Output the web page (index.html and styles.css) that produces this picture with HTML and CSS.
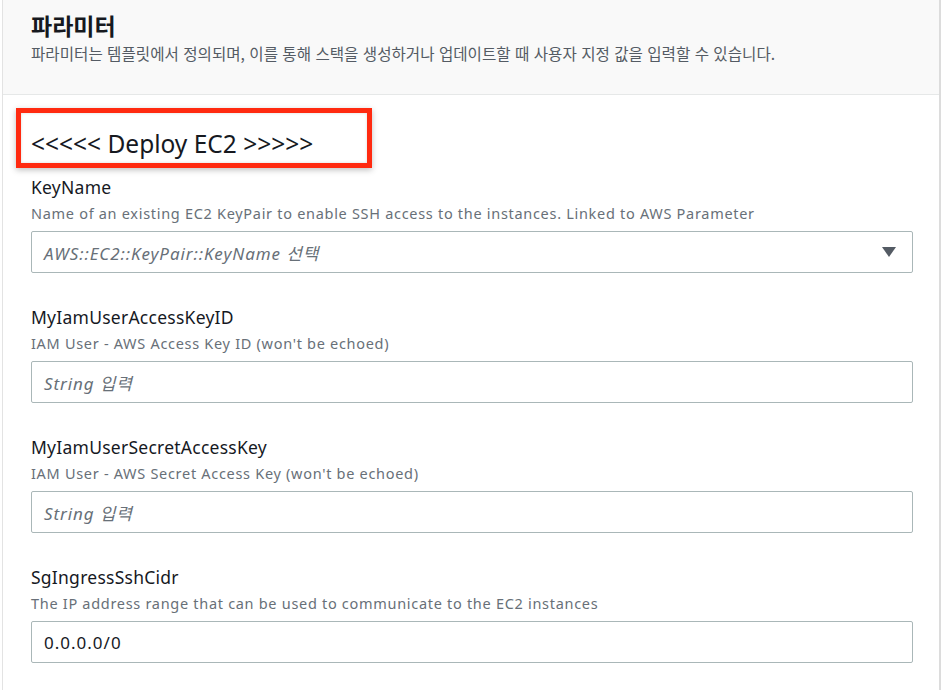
FILE: index.html
```html
<!DOCTYPE html>
<html lang="ko">
<head>
<meta charset="utf-8">
<link rel="stylesheet" href="styles.css">
</head>
<body>
<div class="panel">
  <div class="header">
    <h2 class="title">파라미터</h2>
    <p class="subtitle">파라미터는 템플릿에서 정의되며, 이를 통해 스택을 생성하거나 업데이트할 때 사용자 지정 값을 입력할 수 있습니다.</p>
  </div>
  <div class="content">
    <div class="group-title">&lt;&lt;&lt;&lt;&lt; Deploy EC2 &gt;&gt;&gt;&gt;&gt;</div>

    <div class="field">
      <div class="label">KeyName</div>
      <div class="desc">Name of an existing EC2 KeyPair to enable SSH access to the instances. Linked to AWS Parameter</div>
      <div class="control select">
        <span class="placeholder">AWS::EC2::KeyPair::KeyName 선택</span>
        <svg class="caret" width="14" height="10" viewBox="0 0 14 10"><path d="M0 0 H14 L7 10 Z" fill="#545b64"/></svg>
      </div>
    </div>

    <div class="field">
      <div class="label">MyIamUserAccessKeyID</div>
      <div class="desc">IAM User - AWS Access Key ID (won't be echoed)</div>
      <div class="control"><span class="placeholder">String 입력</span></div>
    </div>

    <div class="field">
      <div class="label">MyIamUserSecretAccessKey</div>
      <div class="desc">IAM User - AWS Secret Access Key (won't be echoed)</div>
      <div class="control"><span class="placeholder">String 입력</span></div>
    </div>

    <div class="field">
      <div class="label">SgIngressSshCidr</div>
      <div class="desc">The IP address range that can be used to communicate to the EC2 instances</div>
      <div class="control"><span class="value">0.0.0.0/0</span></div>
    </div>
  </div>
</div>
</body>
</html>
```

FILE: styles.css
```css
html, body {
  margin: 0;
  padding: 0;
  background: #ffffff;
}

body {
  font-family: "Noto Sans", "Noto Sans CJK KR", sans-serif;
  color: #16191f;
}

.panel {
  margin-left: 2px;
  width: 939px;
  height: 690px;
  border-left: 1px solid #e3e3e3;
  border-right: 2px solid #dcdcdc;
  box-sizing: border-box;
  overflow: hidden;
}

.header {
  background: #f9f9f9;
  border-bottom: 1px solid #e6e8e8;
  height: 95px;
  box-sizing: border-box;
  padding: 8px 28px 0;
}

.title {
  margin: 0;
  font-family: "Noto Sans CJK KR", sans-serif;
  font-size: 23px;
  font-weight: 700;
  line-height: 34px;
  color: #16191f;
}

.subtitle {
  margin: 1px 0 0;
  font-family: "Noto Sans CJK KR", sans-serif;
  font-size: 15.6px;
  line-height: 20px;
  color: #545b64;
}

.content {
  padding: 13px 28px 0;
}

.group-title {
  display: inline-block;
  margin-left: -15px;
  width: 356px;
  height: 60px;
  box-sizing: border-box;
  border: 5px solid #ff2a10;
  box-shadow: 0 2px 6px rgba(0, 0, 0, 0.25), inset 0 0 3px rgba(0, 0, 0, 0.15);
  padding: 16px 0 0 10px;
  font-size: 24.5px;
  line-height: 30px;
  color: #16191f;
}

.field {
  margin-top: 8px;
  margin-bottom: 33px;
}

.label {
  font-size: 17.5px;
  line-height: 22px;
  letter-spacing: 0.25px;
  color: #16191f;
}

.desc {
  margin-top: 5px;
  font-size: 14.5px;
  line-height: 20px;
  letter-spacing: 0.7px;
  color: #687078;
}

.control {
  margin-top: 8px;
  width: 882px;
  height: 42px;
  box-sizing: border-box;
  border: 1px solid #aab7b8;
  border-radius: 2px;
  display: flex;
  align-items: center;
  padding: 0 12px;
  background: #fff;
}

.select {
  justify-content: space-between;
  padding-right: 16px;
}

.placeholder {
  font-style: italic;
  font-size: 17px;
  letter-spacing: 0.9px;
  color: #687078;
}

.value {
  font-size: 17px;
  letter-spacing: 1px;
  color: #16191f;
}

.caret {
  display: block;
}
```
